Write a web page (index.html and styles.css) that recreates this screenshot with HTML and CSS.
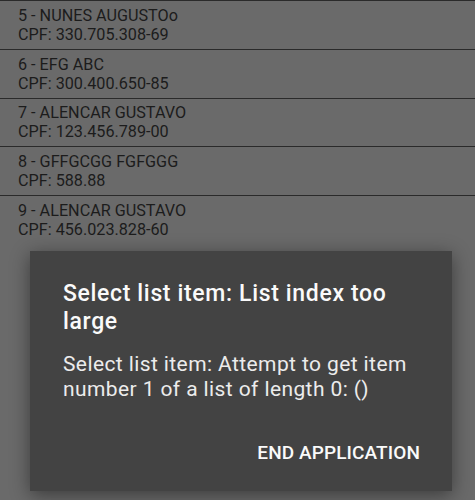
FILE: index.html
```html
<!DOCTYPE html>
<html lang="pt">
<head>
    <meta charset="UTF-8">
    <meta name="viewport" content="width=device-width, initial-scale=1.0">
    <title>Lista de Clientes</title>
    <link rel="stylesheet" href="styles.css">
</head>
<body>
    <!-- Lista de clientes -->
    <ul class="lista">
        <li class="item">
            <span class="nome">5 - NUNES AUGUSTOo</span>
            <span class="cpf">CPF: 330.705.308-69</span>
        </li>
        <li class="item">
            <span class="nome">6 - EFG ABC</span>
            <span class="cpf">CPF: 300.400.650-85</span>
        </li>
        <li class="item">
            <span class="nome">7 - ALENCAR GUSTAVO</span>
            <span class="cpf">CPF: 123.456.789-00</span>
        </li>
        <li class="item">
            <span class="nome">8 - GFFGCGG FGFGGG</span>
            <span class="cpf">CPF: 588.88</span>
        </li>
        <li class="item">
            <span class="nome">9 - ALENCAR GUSTAVO</span>
            <span class="cpf">CPF: 456.023.828-60</span>
        </li>
    </ul>

    <!-- Dialogo de erro -->
    <div class="dialogo">
        <h2 class="dialogo-titulo">Select list item: List index too large</h2>
        <p class="dialogo-texto">Select list item: Attempt to get item number 1 of a list of length 0: ()</p>
        <div class="dialogo-acoes">
            <button class="botao">END APPLICATION</button>
        </div>
    </div>
</body>
</html>
```

FILE: styles.css
```css
body {
    font-family: Roboto, "Liberation Sans", sans-serif;
    margin: 0;
    width: 475px;
    height: 500px;
    overflow: hidden;
    background-color: #6a6a6a;
    position: relative;
}
.lista {
    list-style: none;
    margin: 0;
    padding: 0;
}
.item {
    box-sizing: border-box;
    height: 48.75px;
    border-top: 1px solid #2a2a2a;
    padding: 4.9px 18px 0;
    display: flex;
    flex-direction: column;
    color: #1c1c1c;
    font-size: 16.2px;
    line-height: 19px;
}
.dialogo {
    position: absolute;
    left: 30px;
    top: 251px;
    width: 422px;
    height: 240px;
    box-sizing: border-box;
    padding: 29px 32px 0 33px;
    background-color: #434343;
    box-shadow: 0 4px 18px rgba(0, 0, 0, 0.45);
    display: flex;
    flex-direction: column;
}
.dialogo-titulo {
    margin: 0;
    font-size: 23px;
    font-weight: 500;
    line-height: 28px;
    letter-spacing: 0.65px;
    color: #fafafa;
}
.dialogo-texto {
    margin: 16px 0 0;
    font-size: 21px;
    line-height: 25px;
    letter-spacing: 0.4px;
    color: #ececec;
}
.dialogo-acoes {
    display: flex;
    justify-content: flex-end;
    margin-top: 39px;
}
.botao {
    background: none;
    border: none;
    padding: 0;
    font-family: inherit;
    font-size: 19px;
    font-weight: 500;
    line-height: 24px;
    letter-spacing: 0.1px;
    color: #fafafa;
    cursor: pointer;
}
```
